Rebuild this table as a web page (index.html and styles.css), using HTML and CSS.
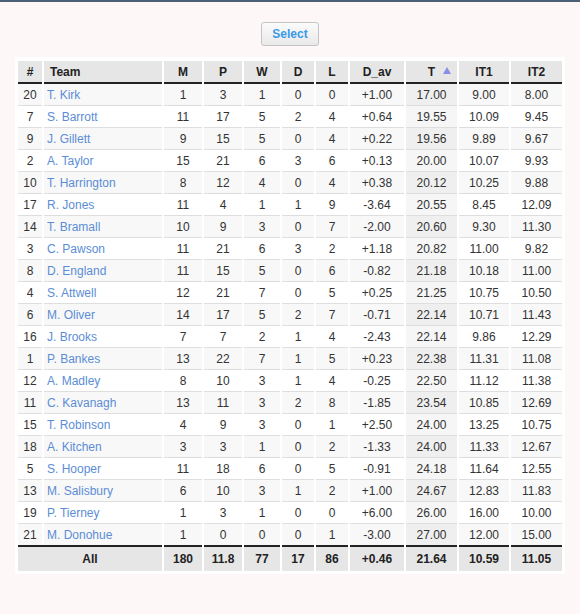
FILE: index.html
```html
<!DOCTYPE html>
<html>
<head>
<meta charset="utf-8">
<link rel="stylesheet" href="styles.css">
</head>
<body>
<div class="topbar"></div>
<div class="page">
  <div class="actions"><button class="select-btn">Select</button></div>
  <div class="panel">
    <table class="stats">
      <colgroup>
        <col class="c-num"><col class="c-team"><col class="c-m"><col class="c-p"><col class="c-w"><col class="c-d"><col class="c-l"><col class="c-dav"><col class="c-t"><col class="c-it1"><col class="c-it2">
      </colgroup>
      <thead>
        <tr><th>#</th><th class="team">Team</th><th>M</th><th>P</th><th>W</th><th>D</th><th>L</th><th>D_av</th><th class="sorted">T<span class="arrow"></span></th><th>IT1</th><th>IT2</th></tr>
      </thead>
      <tbody>
        <tr><td>20</td><td class="team"><a>T. Kirk</a></td><td>1</td><td>3</td><td>1</td><td>0</td><td>0</td><td>+1.00</td><td class="sorted">17.00</td><td>9.00</td><td>8.00</td></tr>
        <tr><td>7</td><td class="team"><a>S. Barrott</a></td><td>11</td><td>17</td><td>5</td><td>2</td><td>4</td><td>+0.64</td><td class="sorted">19.55</td><td>10.09</td><td>9.45</td></tr>
        <tr><td>9</td><td class="team"><a>J. Gillett</a></td><td>9</td><td>15</td><td>5</td><td>0</td><td>4</td><td>+0.22</td><td class="sorted">19.56</td><td>9.89</td><td>9.67</td></tr>
        <tr><td>2</td><td class="team"><a>A. Taylor</a></td><td>15</td><td>21</td><td>6</td><td>3</td><td>6</td><td>+0.13</td><td class="sorted">20.00</td><td>10.07</td><td>9.93</td></tr>
        <tr><td>10</td><td class="team"><a>T. Harrington</a></td><td>8</td><td>12</td><td>4</td><td>0</td><td>4</td><td>+0.38</td><td class="sorted">20.12</td><td>10.25</td><td>9.88</td></tr>
        <tr><td>17</td><td class="team"><a>R. Jones</a></td><td>11</td><td>4</td><td>1</td><td>1</td><td>9</td><td>-3.64</td><td class="sorted">20.55</td><td>8.45</td><td>12.09</td></tr>
        <tr><td>14</td><td class="team"><a>T. Bramall</a></td><td>10</td><td>9</td><td>3</td><td>0</td><td>7</td><td>-2.00</td><td class="sorted">20.60</td><td>9.30</td><td>11.30</td></tr>
        <tr><td>3</td><td class="team"><a>C. Pawson</a></td><td>11</td><td>21</td><td>6</td><td>3</td><td>2</td><td>+1.18</td><td class="sorted">20.82</td><td>11.00</td><td>9.82</td></tr>
        <tr><td>8</td><td class="team"><a>D. England</a></td><td>11</td><td>15</td><td>5</td><td>0</td><td>6</td><td>-0.82</td><td class="sorted">21.18</td><td>10.18</td><td>11.00</td></tr>
        <tr><td>4</td><td class="team"><a>S. Attwell</a></td><td>12</td><td>21</td><td>7</td><td>0</td><td>5</td><td>+0.25</td><td class="sorted">21.25</td><td>10.75</td><td>10.50</td></tr>
        <tr><td>6</td><td class="team"><a>M. Oliver</a></td><td>14</td><td>17</td><td>5</td><td>2</td><td>7</td><td>-0.71</td><td class="sorted">22.14</td><td>10.71</td><td>11.43</td></tr>
        <tr><td>16</td><td class="team"><a>J. Brooks</a></td><td>7</td><td>7</td><td>2</td><td>1</td><td>4</td><td>-2.43</td><td class="sorted">22.14</td><td>9.86</td><td>12.29</td></tr>
        <tr><td>1</td><td class="team"><a>P. Bankes</a></td><td>13</td><td>22</td><td>7</td><td>1</td><td>5</td><td>+0.23</td><td class="sorted">22.38</td><td>11.31</td><td>11.08</td></tr>
        <tr><td>12</td><td class="team"><a>A. Madley</a></td><td>8</td><td>10</td><td>3</td><td>1</td><td>4</td><td>-0.25</td><td class="sorted">22.50</td><td>11.12</td><td>11.38</td></tr>
        <tr><td>11</td><td class="team"><a>C. Kavanagh</a></td><td>13</td><td>11</td><td>3</td><td>2</td><td>8</td><td>-1.85</td><td class="sorted">23.54</td><td>10.85</td><td>12.69</td></tr>
        <tr><td>15</td><td class="team"><a>T. Robinson</a></td><td>4</td><td>9</td><td>3</td><td>0</td><td>1</td><td>+2.50</td><td class="sorted">24.00</td><td>13.25</td><td>10.75</td></tr>
        <tr><td>18</td><td class="team"><a>A. Kitchen</a></td><td>3</td><td>3</td><td>1</td><td>0</td><td>2</td><td>-1.33</td><td class="sorted">24.00</td><td>11.33</td><td>12.67</td></tr>
        <tr><td>5</td><td class="team"><a>S. Hooper</a></td><td>11</td><td>18</td><td>6</td><td>0</td><td>5</td><td>-0.91</td><td class="sorted">24.18</td><td>11.64</td><td>12.55</td></tr>
        <tr><td>13</td><td class="team"><a>M. Salisbury</a></td><td>6</td><td>10</td><td>3</td><td>1</td><td>2</td><td>+1.00</td><td class="sorted">24.67</td><td>12.83</td><td>11.83</td></tr>
        <tr><td>19</td><td class="team"><a>P. Tierney</a></td><td>1</td><td>3</td><td>1</td><td>0</td><td>0</td><td>+6.00</td><td class="sorted">26.00</td><td>16.00</td><td>10.00</td></tr>
        <tr><td>21</td><td class="team"><a>M. Donohue</a></td><td>1</td><td>0</td><td>0</td><td>0</td><td>1</td><td>-3.00</td><td class="sorted">27.00</td><td>12.00</td><td>15.00</td></tr>
      </tbody>
      <tfoot>
        <tr><td colspan="2">All</td><td>180</td><td>11.8</td><td>77</td><td>17</td><td>86</td><td>+0.46</td><td>21.64</td><td>10.59</td><td>11.05</td></tr>
      </tfoot>
    </table>
  </div>
</div>
</body>
</html>
```

FILE: styles.css
```css
html, body {
  margin: 0;
  padding: 0;
  background: #fdf7f7;
  font-family: "Liberation Sans", Arial, sans-serif;
  font-size: 12px;
  color: #333;
}
.topbar {
  height: 2px;
  background: #4b6074;
}
.page {
  display: flex;
  flex-direction: column;
  align-items: center;
  padding-top: 20px;
}
.actions {
  display: flex;
  justify-content: center;
  margin-bottom: 11px;
}
.select-btn {
  box-sizing: border-box;
  width: 58px;
  height: 24px;
  border: 1px solid #c4c4c4;
  border-radius: 3px;
  background: linear-gradient(#fbfbfb, #e9e9e9);
  color: #3a9ae8;
  font-family: "Liberation Sans", Arial, sans-serif;
  font-weight: bold;
  font-size: 12px;
  padding: 0;
}
.panel {
  background: #fff;
  padding: 4px 1px 3px 1px;
}
.stats {
  table-layout: fixed;
  width: 548px;
  border-collapse: separate;
  border-spacing: 2px 0;
}
.c-num { width: 24px; }
.c-team { width: 118px; }
.c-m { width: 38px; }
.c-p { width: 38px; }
.c-w { width: 36px; }
.c-d { width: 32px; }
.c-l { width: 32px; }
.c-dav { width: 54px; }
.c-t { width: 51px; }
.c-it1 { width: 50px; }
.c-it2 { width: 51px; }

.stats th {
  background: #e6e6e6;
  font-weight: bold;
  color: #222;
  height: 21px;
  padding: 0;
  text-align: center;
  border-bottom: 2px solid #222;
  position: relative;
}
.stats th.team {
  text-align: left;
  padding-left: 6px;
}
.arrow {
  position: absolute;
  right: 6px;
  top: 6px;
  width: 0;
  height: 0;
  border-left: 4px solid transparent;
  border-right: 4px solid transparent;
  border-bottom: 7px solid #8a8ee6;
}
.stats td {
  height: 21px;
  padding: 0;
  text-align: center;
  border-bottom: 1px solid #dedede;
  color: #333;
}
.stats tbody tr:nth-child(odd) td { background: #f8f8f8; }
.stats tbody tr:nth-child(even) td { background: #fff; }
.stats tbody tr:nth-child(odd) td.sorted { background: #efefef; }
.stats tbody tr:nth-child(even) td.sorted { background: #f6f6f6; }
.stats tbody tr:last-child td { border-bottom: none; }
.stats td.team {
  text-align: left;
  padding-left: 3px;
  white-space: nowrap;
}
.stats td.team a {
  color: #5b8dd6;
  text-decoration: none;
}
.stats tfoot td {
  background: #e6e6e6;
  font-weight: bold;
  color: #222;
  height: 24px;
  border-top: 2px solid #222;
  border-bottom: none;
}
```
